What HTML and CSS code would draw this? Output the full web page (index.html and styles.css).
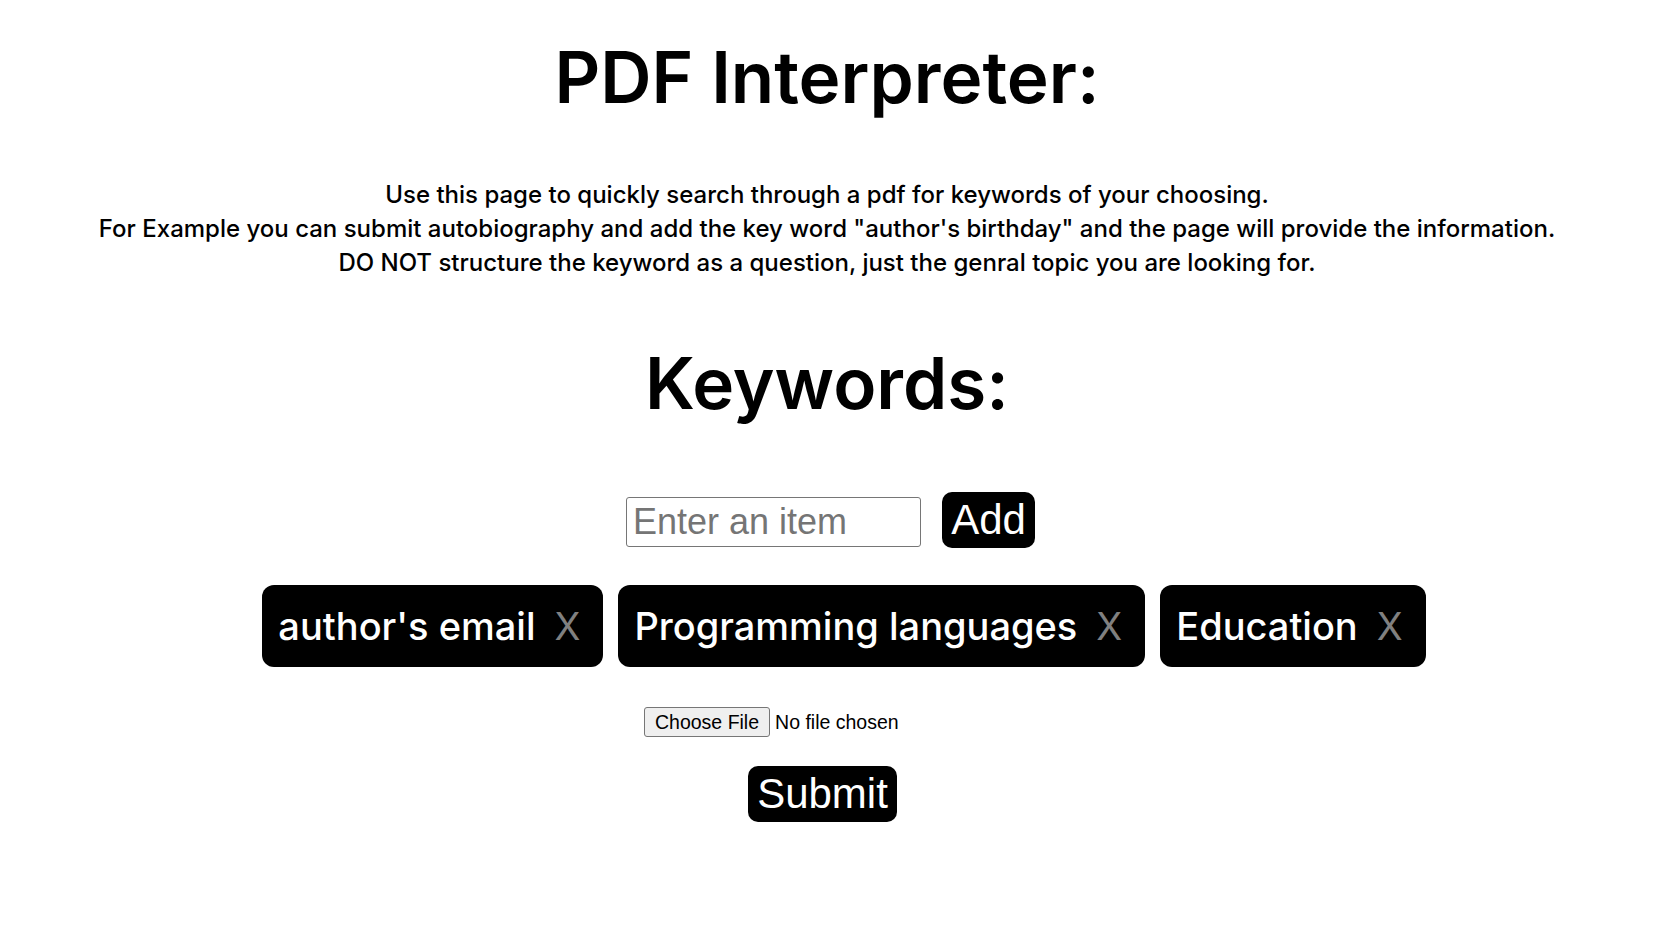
FILE: index.html
```html
<!DOCTYPE html>
<html lang="en">
<head>
<meta charset="utf-8">
<title>PDF Interpreter</title>
<link rel="stylesheet" href="styles.css">
</head>
<body>
<main class="page">
  <h1 class="title">PDF Interpreter:</h1>
  <p class="intro">Use this page to quickly search through a pdf for keywords of your choosing.<br>For Example you can submit autobiography and add the key word "author's birthday" and the page will provide the information.<br>DO NOT structure the keyword as a question, just the genral topic you are looking for.</p>
  <h2 class="title title-keywords">Keywords:</h2>
  <div class="add-row">
    <input class="item-input" type="text" placeholder="Enter an item">
    <button class="btn btn-add" type="button">Add</button>
  </div>
  <div class="chips">
    <div class="chip"><span class="chip-label">author's email</span><span class="chip-x">X</span></div>
    <div class="chip"><span class="chip-label">Programming languages</span><span class="chip-x">X</span></div>
    <div class="chip"><span class="chip-label">Education</span><span class="chip-x">X</span></div>
  </div>
  <div class="file-row">
    <input class="file-input" type="file">
  </div>
  <div class="submit-row">
    <button class="btn btn-submit" type="button">Submit</button>
  </div>
</main>
</body>
</html>
```
FILE: styles.css
```css
html, body {
  margin: 0;
  padding: 0;
  background: #ffffff;
}
.page {
  width: 1654px;
  display: flex;
  flex-direction: column;
  align-items: center;
  font-family: Inter, "Noto Sans", sans-serif;
  color: #000;
}
.title {
  margin: 37px 0 0;
  height: 80px;
  line-height: 80px;
  font-size: 71px;
  font-weight: 600;
  letter-spacing: 0;
}
.title-keywords {
  margin-top: 63px;
}
.intro {
  margin: 61px 0 0;
  font-size: 24px;
  line-height: 34px;
  text-align: center;
  font-weight: 500;
}
.add-row {
  margin-top: 69px;
  height: 56px;
  display: flex;
  align-items: center;
  gap: 21px;
  padding-left: 7px;
}
.item-input {
  box-sizing: border-box;
  width: 295px;
  height: 50px;
  margin-top: 4px;
  border: 1px solid #767676;
  border-radius: 3px;
  padding: 0 6px;
  font-family: "Liberation Sans", Arial, sans-serif;
  font-size: 36px;
  color: #000;
}
.item-input::placeholder {
  color: #757575;
}
.btn {
  box-sizing: border-box;
  height: 56px;
  border: none;
  border-radius: 10px;
  background: #000;
  color: #fff;
  font-family: "Liberation Sans", Arial, sans-serif;
  font-size: 42px;
  line-height: 56px;
  padding: 0 9px;
}
.btn-add {
  width: 93px;
}
.chips {
  margin-top: 37px;
  display: flex;
  gap: 15px;
  padding-left: 34px;
}
.chip {
  box-sizing: border-box;
  height: 82px;
  display: flex;
  align-items: center;
  gap: 19px;
  padding: 0 23px 0 16px;
  background: #000;
  border-radius: 12px;
  font-size: 38px;
  font-weight: 500;
}
.chip-label {
  color: #fff;
}
.chip-x {
  color: #808080;
  font-weight: 400;
}
.file-row {
  margin-top: 40px;
  height: 30px;
}
.file-input {
  width: 366px;
  height: 30px;
  font-family: "Liberation Sans", Arial, sans-serif;
  font-size: 19.5px;
  color: #000;
}
.file-input::file-selector-button {
  box-sizing: border-box;
  height: 30px;
  padding: 0 10px;
  margin-right: 5px;
  border: 1px solid #767676;
  border-radius: 3px;
  background: #efefef;
  font-family: "Liberation Sans", Arial, sans-serif;
  font-size: 19.5px;
  color: #000;
}
.submit-row {
  margin-top: 29px;
  padding-right: 9px;
}
.btn-submit {
  width: 149px;
}
```
